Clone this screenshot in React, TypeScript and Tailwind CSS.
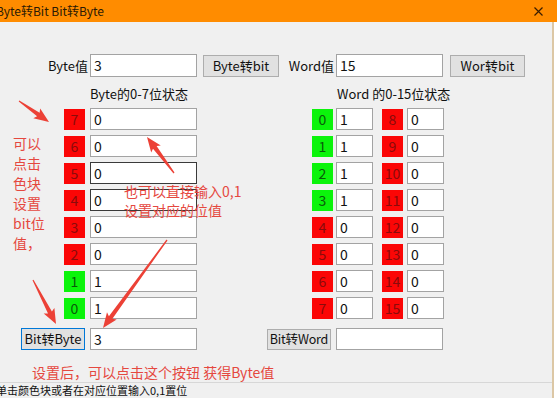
import React from 'react';

const FONT = "font-['Noto_Sans_CJK_SC','Noto_Sans',sans-serif]";

type Pt = [number, number];

// tapered red annotation arrow, tail -> head
const arrowPoints = (t: Pt, h: Pt) => {
  const dx = h[0] - t[0];
  const dy = h[1] - t[1];
  const len = Math.hypot(dx, dy);
  const ux = dx / len, uy = dy / len;
  const nx = -uy, ny = ux;
  const headLen = 13, headW = 6, shaftW = 2.2;
  const bx = h[0] - ux * headLen, by = h[1] - uy * headLen;
  const pts: Pt[] = [
    [t[0] + nx * 0.6, t[1] + ny * 0.6],
    [bx + nx * shaftW, by + ny * shaftW],
    [bx + nx * headW - ux * 2, by + ny * headW - uy * 2],
    h,
    [bx - nx * headW - ux * 2, by - ny * headW - uy * 2],
    [bx - nx * shaftW, by - ny * shaftW],
    [t[0] - nx * 0.6, t[1] - ny * 0.6],
  ];
  return pts.map(p => `${p[0].toFixed(1)},${p[1].toFixed(1)}`).join(' ');
};

const arrows: [Pt, Pt][] = [
  [[19, 101], [49, 122]],
  [[174, 173], [147, 137]],
  [[167, 240], [103, 328]],
  [[33, 280], [56, 324]],
];

const BitBlock: React.FC<{ n: number; on: boolean }> = ({ n, on }) => (
  <div
    className={`w-[21px] h-[21px] flex items-center justify-center text-[14px] leading-none ${
      on ? 'bg-[#0bf40b] text-[#0a5a0a]' : 'bg-[#fb0606] text-[#8a0b0b]'
    }`}
  >
    {n}
  </div>
);

const Box: React.FC<{ value: string; w: string; dark?: boolean }> = ({ value, w, dark }) => (
  <div
    className={`${w} h-[22px] bg-white border ${dark ? 'border-[#3a3a3a]' : 'border-[#a3a3a3]'} flex items-center pl-[3px] text-[14px] text-[#111]`}
  >
    {value}
  </div>
);

export default function App() {
  const byteBits = [0, 0, 0, 0, 0, 0, 1, 1]; // bit 7 .. 0
  const wordBits = Array.from({ length: 16 }, (_, i) => (i < 4 ? 1 : 0));

  return (
    <div className={`relative w-[557px] h-[398px] overflow-hidden bg-white ${FONT}`}>
      {/* title bar */}
      <div className="h-[22px] bg-[#ff8c00] flex items-center justify-between">
        <span className="-ml-[4px] text-[12px] text-[#2a1a05] whitespace-nowrap">Byte转Bit Bit转Byte</span>
        <svg className="mr-[14px]" width="9" height="9" viewBox="0 0 9 9">
          <path d="M0.5 0.5 L8.5 8.5 M8.5 0.5 L0.5 8.5" stroke="#3a1d00" strokeWidth="1.2" />
        </svg>
      </div>

      <div className="flex h-[376px]">
        <div className="w-[552px] h-full bg-[#f0f0f0] flex flex-col text-[13px] text-[#111]">
          {/* value row */}
          <div className="flex items-center h-[23px] mt-[32px]">
            <span className="w-[88px] text-right">Byte值</span>
            <div className="ml-[2px] w-[107px] h-[23px] bg-white border border-[#a3a3a3] flex items-center pl-[3px] text-[14px]">3</div>
            <button className="ml-[6px] w-[76px] h-[22px] bg-[#e1e1e1] border border-[#adadad] text-[13px] whitespace-nowrap px-0">Byte转bit</button>
            <span className="w-[55px] text-right">Word值</span>
            <div className="ml-[2px] w-[107px] h-[23px] bg-white border border-[#a3a3a3] flex items-center pl-[3px] text-[14px]">15</div>
            <button className="ml-[7px] w-[75px] h-[22px] bg-[#e1e1e1] border border-[#adadad] text-[13px] whitespace-nowrap px-0">Wor转bit</button>
          </div>

          {/* headers */}
          <div className="flex items-center h-[20px] mt-[7px]">
            <span className="ml-[90px] w-[247px]">Byte的0-7位状态</span>
            <span>Word 的0-15位状态</span>
          </div>

          {/* bit rows */}
          <div className="flex flex-col gap-[5px] mt-[4px]">
            {byteBits.map((b, i) => {
              const bit = 7 - i;
              return (
                <div key={i} className="flex items-center h-[22px]">
                  <div className="ml-[64px]">
                    <BitBlock n={bit} on={b === 1} />
                  </div>
                  <div className="ml-[5px]">
                    <Box value={String(b)} w="w-[107px]" dark={bit === 5 || bit === 4} />
                  </div>
                  <div className="ml-[115px]">
                    <BitBlock n={i} on={wordBits[i] === 1} />
                  </div>
                  <div className="ml-[3px]">
                    <Box value={String(wordBits[i])} w="w-[37px]" />
                  </div>
                  <div className="ml-[9px]">
                    <BitBlock n={i + 8} on={wordBits[i + 8] === 1} />
                  </div>
                  <div className="ml-[4px]">
                    <Box value={String(wordBits[i + 8])} w="w-[37px]" />
                  </div>
                </div>
              );
            })}
          </div>

          {/* convert row */}
          <div className="flex items-center h-[22px] mt-[9px]">
            <button className="ml-[21px] w-[64px] h-[22px] bg-[#e1e1e1] border border-[#0078d7] text-[13px] whitespace-nowrap px-0">Bit转Byte</button>
            <div className="ml-[5px]">
              <Box value="3" w="w-[107px]" />
            </div>
            <button className="ml-[70px] w-[64px] h-[21px] bg-[#e1e1e1] border border-[#adadad] text-[12.5px] whitespace-nowrap px-0 tracking-[-0.2px]">Bit转Word</button>
            <div className="ml-[5px]">
              <Box value="" w="w-[107px]" />
            </div>
          </div>

          <div className="flex-1" />

          {/* status bar */}
          <div className="h-[16px] border-t border-[#d7d7d7] flex items-center">
            <span className="-ml-[4px] text-[11px] text-[#111] leading-none whitespace-nowrap">单击颜色块或者在对应位置输入0,1置位</span>
          </div>
        </div>
        <div className="w-[2px] h-full bg-[#dcc7a5]" />
        <div className="flex-1 h-full bg-white" />
      </div>

      {/* annotations */}
      <div className="absolute left-[13px] top-[133px] flex flex-col text-[14px] leading-[20px] text-[#e5483f]">
        <span>可以</span>
        <span>点击</span>
        <span>色块</span>
        <span>设置</span>
        <span>bit位</span>
        <span>值，</span>
      </div>
      <div className="absolute left-[124px] top-[182px] flex flex-col text-[14px] leading-[19px] text-[#e5483f]">
        <span>也可以直接输入0,1</span>
        <span>设置对应的位值</span>
      </div>
      <div className="absolute left-[32px] top-[364px] text-[14px] leading-[17px] text-[#e5483f] whitespace-nowrap">
        设置后，可以点击这个按钮 获得Byte值
      </div>

      <svg className="absolute left-0 top-0 pointer-events-none" width="557" height="398">
        {arrows.map(([t, h], i) => (
          <polygon key={i} points={arrowPoints(t, h)} fill="#ec4136" />
        ))}
      </svg>
    </div>
  );
}
